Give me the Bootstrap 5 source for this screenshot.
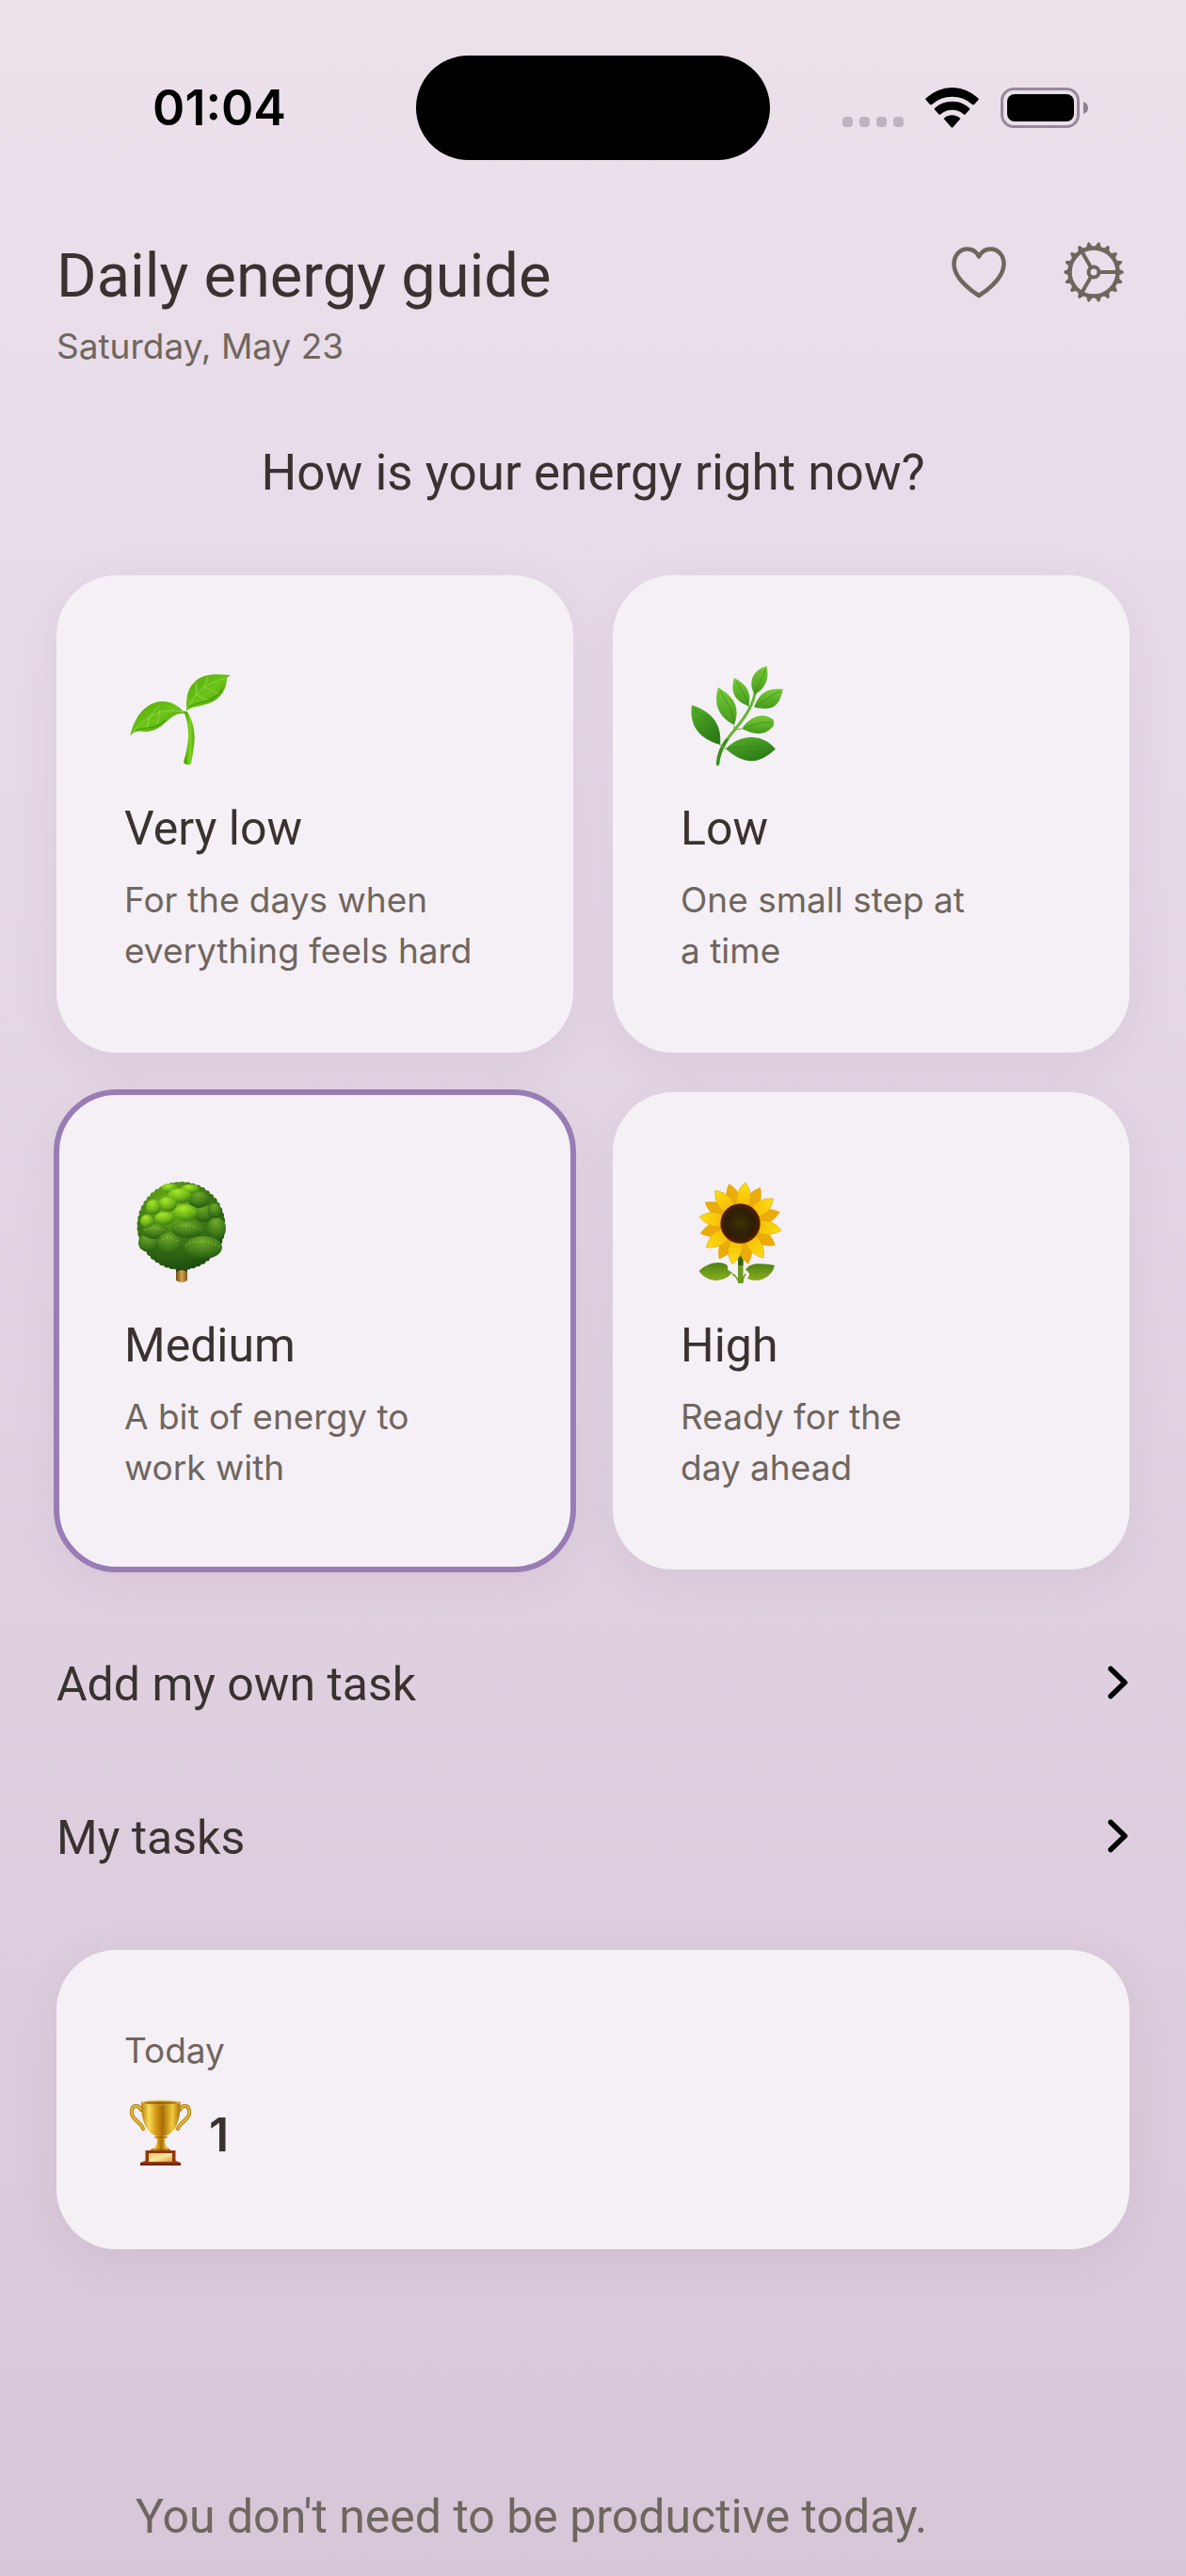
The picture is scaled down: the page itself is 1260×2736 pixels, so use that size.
<!DOCTYPE html>
<html lang="en">
<head>
<meta charset="utf-8">
<meta name="viewport" content="width=device-width, initial-scale=1">
<title>Daily energy guide</title>
<link rel="stylesheet" href="https://cdn.jsdelivr.net/npm/bootstrap@5.3.0/dist/css/bootstrap.min.css">
<style>
  :root { --ink: #3a3230; --soft: #6f665e; --panel: #f5f0f6; --accent: #987db5; }
  body {
    font-family: Roboto, "Liberation Sans", sans-serif;
    color: var(--ink);
    min-height: 100vh;
    background: linear-gradient(180deg, #ebe1ea 0%, #e8dcea 18%, #dfd0e0 64%, #d7c6d8 100%);
  }
  a, button { color: inherit; }
  svg { display: block; flex: none; }
  .status-bar { padding-top: 59px; color: #000; }
  .status-side { flex: 1 1 0; }
  .status-time { font-family: Inter, sans-serif; font-size: 52px; line-height: 62px; font-weight: 600; padding-left: 24px; }
  .status-icons { gap: 23px; padding-right: 104px; }
  .island { width: 376px; height: 111px; background: #000; }
  .page { padding: 83px 60px 30px; }
  .page-title { font-size: 65px; line-height: 80px; font-weight: 400; }
  .note { font-family: Inter, sans-serif; font-size: 37px; line-height: 54px; color: var(--soft); }
  .head-actions { gap: 46px; color: var(--soft); }
  .question { font-size: 53px; line-height: 66px; font-weight: 400; margin: 74px 0 76px; }
  .levels { --bs-gutter-x: 42px; --bs-gutter-y: 42px; }
  .panel {
    background: var(--panel);
    border: 0;
    border-radius: 64px;
    box-shadow: 0 12px 48px rgba(90, 60, 80, .08);
  }
  .level { padding: 72px 60px 81px 72px; }
  .level.chosen { outline: 6px solid var(--accent); outline-offset: -3px; }
  .level-name { font-size: 50px; line-height: 61px; margin: 35px 0 18px; }
  .links { margin: 41px 0 37px; }
  .link-row { font-size: 50px; line-height: 61px; padding: 51px 0; }
  .today { padding: 80px 72px; }
  .score { font-family: Inter, sans-serif; margin-top: 20px; gap: 16px; height: 84px; font-size: 50px; line-height: 61px; font-weight: 600; }
  .closing { font-size: 50px; line-height: 61px; color: var(--soft); margin: 254px 0 0; padding-left: 84px; }
</style>
<script src="https://cdn.jsdelivr.net/npm/bootstrap@5.3.0/dist/js/bootstrap.bundle.min.js"></script>
</head>
<body>

<div class="status-bar d-flex align-items-center">
  <div class="status-side">
    <div class="status-time text-center">01:04</div>
  </div>
  <div class="island rounded-pill"></div>
  <div class="status-side">
    <div class="status-icons d-flex justify-content-end align-items-center">
      <svg width="65" height="43" viewBox="0 0 65 43" fill="#bfb3c0" aria-hidden="true">
        <rect x="0" y="31" width="11" height="11" rx="4"/><rect x="18" y="31" width="11" height="11" rx="4"/><rect x="36" y="31" width="11" height="11" rx="4"/><rect x="54" y="31" width="11" height="11" rx="4"/>
      </svg>
      <svg width="57" height="43" viewBox="0 0 57 43" aria-hidden="true">
        <path d="M0.5 13 Q0 12 1 11 A40 40 0 0 1 56 11 Q57 12 56.500 13 L52 18 Q51 18.500 50 18 A32 32 0 0 0 7 18 Q6 18.500 5 18Z"/>
        <path d="M10 23.500 Q9.500 22.500 10 22 A27 27 0 0 1 47 22 Q47.500 22.500 47 23.500 L42.500 28.500 Q41.500 29 41 28.500 A18.500 18.500 0 0 0 16 28.500 Q15.500 29 14.500 28.500Z"/>
        <path d="M20 33.500 Q19.500 33 20 32.500 A13 13 0 0 1 37 32.500 Q37.500 33 37 33.500 L29.500 42 Q28.500 43 27.500 42Z"/>
      </svg>
      <svg width="93" height="43" viewBox="0 0 93 43" aria-hidden="true">
        <rect x="1.500" y="1.500" width="81" height="40" rx="12.500" fill="none" stroke="#95899a" stroke-width="3"/>
        <rect x="7" y="7" width="71" height="29" rx="8"/>
        <path d="M88 15 Q93 17 93 21.500 Q93 26 88 28Z" fill="#8d8290"/>
      </svg>
    </div>
  </div>
</div>

<main class="page">
  <header class="d-flex justify-content-between align-items-start">
    <div>
      <h1 class="page-title mb-2">Daily energy guide</h1>
      <p class="note mb-0">Saturday, May 23</p>
    </div>
    <div class="head-actions d-flex">
      <button type="button" class="btn p-0 border-0 text-reset" aria-label="Favourites">
        <svg width="76" height="74" viewBox="0 2 76 74" fill="none" stroke="currentColor" stroke-width="4.500" stroke-linejoin="round">
          <path d="M38 63 C33 60 11.500 45.500 11.500 29.500 C11.500 20.500 17.500 13.500 25.500 13.500 C31.500 13.500 35.500 16.500 38 21.500 C40.500 16.500 44.500 13.500 50.500 13.500 C58.500 13.500 64.500 20.500 64.500 29.500 C64.500 45.500 43 60 38 63Z"/>
        </svg>
      </button>
      <button type="button" class="btn p-0 border-0 text-reset" aria-label="Settings">
        <svg width="76" height="74" viewBox="0 2 76 74" fill="none" stroke="currentColor" stroke-width="4">
          <g stroke="none" fill="currentColor">
            <g id="cog6">
              <path id="cog" d="M64.500 34.500 L69.200 36.700 Q71 38 69.200 39.300 L64.500 41.500Z"/>
              <use href="#cog" transform="rotate(20 38 38)"/><use href="#cog" transform="rotate(40 38 38)"/><use href="#cog" transform="rotate(60 38 38)"/><use href="#cog" transform="rotate(80 38 38)"/><use href="#cog" transform="rotate(100 38 38)"/>
            </g>
            <use href="#cog6" transform="rotate(120 38 38)"/><use href="#cog6" transform="rotate(240 38 38)"/>
          </g>
          <circle cx="38" cy="38" r="25.500" stroke-width="4.500"/>
          <circle cx="38" cy="38" r="5.500"/>
          <path d="M44 38H63M35 33L25.500 16.500M35 43L25.500 59.500"/>
        </svg>
      </button>
    </div>
  </header>

  <h2 class="question text-center">How is your energy right now?</h2>

  <div class="row levels">
    <div class="col-6">
      <button type="button" class="card panel level w-100 h-100 text-start">
        <svg width="120" height="132" viewBox="0 0 120 132" aria-hidden="true">
          <defs>
            <linearGradient id="leafA" x1="0" y1="0" x2="1" y2="1"><stop offset="0" stop-color="#4fa80c"/><stop offset=".5" stop-color="#6cc414"/><stop offset="1" stop-color="#3c8a08"/></linearGradient>
            <linearGradient id="stalk" x1="0" x2="1"><stop offset="0" stop-color="#3d9206"/><stop offset=".6" stop-color="#7fd51c"/><stop offset="1" stop-color="#4ea80c"/></linearGradient>
          </defs>
          <path d="M63 72 L67 73 C73 82 76 96 74 109 C73 117 72 122 71 128 Q67 131 63 127 C67 112 72 93 63 72Z" fill="url(#stalk)"/>
          <path d="M6 99 C10 80 22 62 41 62 C51 62 58 67 65 75 C55 74 50 79 44 84 C37 91 28 96 16 93.500 Q9 94 6 99Z" fill="url(#leafA)"/>
          <path d="M66 72 C66 60 66 49 75 41 C85 32 98 33 113 34 L109 37 C109 49 102 60 90 64 C79 68 72 67 66 72Z" fill="url(#leafA)"/>
          <path d="M10 93 C24 78 40 68 62 73 M27 78 L24 91 M38 71 L35 86 M27 78 L38 66 M67 69 C76 53 86 43 107 37 M76 55 L90 61 M84 46 L100 54 M76 55 L77 42 M86 45 L89 36" fill="none" stroke="#93d254" stroke-width="1"/>
          <path d="M12 93 C23 88 30 94 44 82 M68 68 C79 62 96 63 104 49" fill="none" stroke="#327c05" stroke-width="1.500" opacity=".5"/>
        </svg>
        <span class="level-name">Very low</span>
        <span class="note">For the days when<br>everything feels hard</span>
      </button>
    </div>
    <div class="col-6">
      <button type="button" class="card panel level w-100 h-100 text-start">
        <svg width="120" height="132" viewBox="0 0 120 132" aria-hidden="true">
          <defs>
            <linearGradient id="herbLight" x1="0" y1="0" x2="0" y2="1"><stop offset="0" stop-color="#7acb36"/><stop offset="1" stop-color="#43991d"/></linearGradient>
            <linearGradient id="herbDark" x1="0" y1="0" x2=".6" y2="1"><stop offset="0" stop-color="#55b02a"/><stop offset="1" stop-color="#2c7a16"/></linearGradient>
          </defs>
          <path d="M39.500 129 C41 117 45 108 52 99 C64 84 75 72 79 54" fill="none" stroke="#63b634" stroke-width="3" stroke-linecap="round"/>
          <path d="M39.500 128 C40 118 44 110 49 103" fill="none" stroke="#3f8d20" stroke-width="3.500" stroke-linecap="round"/>
          <path d="M42 108 L48 112 M57 88 L57 92 L65 91 M72 66 L75 70" stroke="#63b634" stroke-width="1.200" fill="none"/>
          <g fill="url(#herbDark)">
            <path d="M12 66 C25 70 45 80 42 108 C28 104 8 94 12 66Z"/>
            <path d="M48 112.500 C60 99 84 93 101 112.500 C84 128 70 131 48 112.500Z"/>
          </g>
          <g fill="url(#herbLight)">
            <path d="M40 47 C53 55 65 65 57 87 C43 80 34 68 40 47Z"/>
            <path d="M57 37 C67 42 77 51 72 67 C60 62 52 55 57 37Z"/>
            <path d="M91.500 24.500 C95 38 89 50 78.500 54.500 C72 43 75 29 91.500 24.500Z"/>
            <path d="M109 49 C105 67 98 73 78 68 C85 51 93 48 109 49Z"/>
            <path d="M65 91 C75 76 90 73 99 82 Q100 87 97 90 C88 99 77 97 65 91Z"/>
          </g>
          <path d="M14 70 C26 79 36 90 41 106 M42 51 C49 61 55 72 57 85 M59 41 C65 49 70 57 72 66 M90 28 C87 37 82 46 79 54 M106 51 C97 55 89 61 80 67 M97 84 C87 84 76 86 67 91 M98 112 C82 109 66 109 51 112" fill="none" stroke="#2f8415" stroke-width="1" opacity=".6"/>
        </svg>
        <span class="level-name">Low</span>
        <span class="note">One small step at<br>a time</span>
      </button>
    </div>
    <div class="col-6">
      <button type="button" class="card panel level chosen w-100 h-100 text-start" aria-pressed="true">
        <svg width="120" height="132" viewBox="0 0 120 132" aria-hidden="true">
          <defs>
            <radialGradient id="crown" cx=".38" cy=".25" r=".8"><stop offset="0" stop-color="#7cbf1a"/><stop offset=".5" stop-color="#427f14"/><stop offset="1" stop-color="#1d4d10"/></radialGradient>
            <radialGradient id="puffHi" cx=".4" cy=".25" r=".75"><stop offset="0" stop-color="#a6e627"/><stop offset=".6" stop-color="#6eb31a"/><stop offset="1" stop-color="#3d7c12"/></radialGradient>
            <radialGradient id="puffLo" cx=".45" cy=".2" r=".8"><stop offset="0" stop-color="#6fa82a"/><stop offset=".6" stop-color="#437f1a"/><stop offset="1" stop-color="#245a10"/></radialGradient>
            <linearGradient id="trunk" x1="0" x2="1"><stop offset="0" stop-color="#6e4a18"/><stop offset=".5" stop-color="#d6a547"/><stop offset="1" stop-color="#7d561f"/></linearGradient>
          </defs>
          <path d="M55 105H67V128Q61 132 55 128Z" fill="url(#trunk)"/>
          <path d="M55 108H67V119Q61 115 55 119Z" fill="#2e3410"/>
          <circle cx="60.500" cy="70" r="43" fill="url(#crown)"/>
          <circle cx="60.500" cy="70" r="43" fill="none" stroke="url(#crown)" stroke-width="8" stroke-linecap="round" stroke-dasharray="0 5.500"/>
          <g fill="url(#puffLo)">
            <ellipse cx="26" cy="88" rx="11" ry="10"/><ellipse cx="98" cy="73" rx="10" ry="12"/><ellipse cx="33" cy="76" rx="14" ry="8"/><ellipse cx="48" cy="89" rx="13" ry="12"/><ellipse cx="84" cy="93" rx="20" ry="12"/><ellipse cx="84" cy="57" rx="11" ry="9"/><ellipse cx="67" cy="74" rx="17" ry="9"/><ellipse cx="96" cy="54" rx="7" ry="8"/><ellipse cx="79" cy="42" rx="11" ry="9"/>
          </g>
          <g fill="url(#puffHi)">
            <ellipse cx="48" cy="30" rx="9" ry="5"/><ellipse cx="70" cy="31" rx="10" ry="5"/><ellipse cx="59" cy="38" rx="13" ry="8"/><ellipse cx="46" cy="47" rx="10" ry="8"/><ellipse cx="31" cy="50" rx="8" ry="8"/><ellipse cx="65" cy="56" rx="13" ry="9"/><ellipse cx="43" cy="62" rx="11" ry="7"/><ellipse cx="24" cy="65" rx="7" ry="7"/>
          </g>
          <g fill="none" stroke="#b8ef3c" stroke-width="1.500" stroke-linecap="round" stroke-dasharray="0 4" opacity=".55">
            <path d="M50 36Q59 29 69 37M56 53Q65 47 75 55M35 60Q43 54 52 61M38 45Q46 38 54 46M20 64Q25 58 30 65M54 72Q67 66 81 74M38 86Q48 78 58 87M66 90Q84 82 101 92M22 74Q33 69 45 76"/>
          </g>
        </svg>
        <span class="level-name">Medium</span>
        <span class="note">A bit of energy to<br>work with</span>
      </button>
    </div>
    <div class="col-6">
      <button type="button" class="card panel level w-100 h-100 text-start">
        <svg width="120" height="132" viewBox="0 0 120 132" aria-hidden="true">
          <defs>
            <linearGradient id="petalFill" x1="0" y1="0" x2="0" y2="1"><stop offset="0" stop-color="#fde012"/><stop offset="1" stop-color="#f4b806"/></linearGradient>
            <radialGradient id="disc"><stop offset="0" stop-color="#3b3206"/><stop offset=".65" stop-color="#2b1c05"/><stop offset="1" stop-color="#4d1f04"/></radialGradient>
            <linearGradient id="bloomLeaf" x1="0" y1="0" x2="0" y2="1"><stop offset="0" stop-color="#4c8312"/><stop offset="1" stop-color="#8aad20"/></linearGradient>
            <path id="petal" d="M63.500 23.500 C72 33 73 42 68 52 L59 52 C54 42 56 32 63.500 23.500Z"/>
          </defs>
          <path d="M61 98H66.500V131H61Z" fill="#6b9a1e"/><path d="M61 98H66.500V112H61Z" fill="#34600d"/>
          <path d="M55 121 Q60 124 62 130 M69 121 Q66 125 66 130" fill="none" stroke="#6b9a1e" stroke-width="1.500"/>
          <path d="M19.500 118 C28 109 43 106 50 112 Q49 119 55 119 C49 129 30 133 19.500 118Z" fill="url(#bloomLeaf)"/>
          <path d="M100 112 C97 126 82 131 71 126 Q76 120 69 117 C72 109 86 109 100 112Z" fill="url(#bloomLeaf)"/>
          <g fill="#e9ac0b">
            <use href="#petal" transform="rotate(-16 63.500 67.500)"/><use href="#petal" transform="rotate(29 63.500 67.500)"/><use href="#petal" transform="rotate(74 63.500 67.500)"/><use href="#petal" transform="rotate(122 63.500 67.500)"/><use href="#petal" transform="rotate(169 63.500 67.500)"/><use href="#petal" transform="rotate(211 63.500 67.500)"/><use href="#petal" transform="rotate(256 63.500 67.500)"/><use href="#petal" transform="rotate(301 63.500 67.500)"/>
          </g>
          <g fill="url(#petalFill)" stroke="#e3a205" stroke-width=".6">
            <use href="#petal" transform="rotate(7 63.500 67.500)"/><use href="#petal" transform="rotate(53 63.500 67.500)"/><use href="#petal" transform="rotate(99 63.500 67.500)"/><use href="#petal" transform="rotate(146 63.500 67.500)"/><use href="#petal" transform="rotate(191 63.500 67.500)"/><use href="#petal" transform="rotate(235 63.500 67.500)"/><use href="#petal" transform="rotate(279 63.500 67.500)"/><use href="#petal" transform="rotate(323 63.500 67.500)"/>
          </g>
          <circle cx="63.500" cy="67.500" r="21" fill="url(#disc)"/>
          <g fill="none" stroke="#5c4a0c" stroke-dasharray="1 2" opacity=".8"><circle cx="63.500" cy="67.500" r="5"/><circle cx="63.500" cy="67.500" r="9"/><circle cx="63.500" cy="67.500" r="13"/></g>
          <circle cx="63.500" cy="67.500" r="20.500" fill="none" stroke="#6b2c05" stroke-width="1.500" stroke-dasharray="1.500 1.500"/>
        </svg>
        <span class="level-name">High</span>
        <span class="note">Ready for the<br>day ahead</span>
      </button>
    </div>
  </div>

  <nav class="links" aria-label="Tasks">
    <a href="#add" class="link-row d-flex justify-content-between align-items-center text-decoration-none text-reset">
      Add my own task
      <svg width="24" height="42" viewBox="0 0 24 42" fill="none" stroke="#000" stroke-width="5.500" stroke-linecap="round" stroke-linejoin="round" aria-hidden="true"><path d="M4 3.500L19 18L4 32.500"/></svg>
    </a>
    <a href="#tasks" class="link-row d-flex justify-content-between align-items-center text-decoration-none text-reset">
      My tasks
      <svg width="24" height="42" viewBox="0 0 24 42" fill="none" stroke="#000" stroke-width="5.500" stroke-linecap="round" stroke-linejoin="round" aria-hidden="true"><path d="M4 3.500L19 18L4 32.500"/></svg>
    </a>
  </nav>

  <section class="card panel today">
    <div class="note">Today</div>
    <div class="score d-flex align-items-center">
      <svg width="74" height="84" viewBox="0 0 74 84" role="img" aria-label="Trophies">
        <defs>
          <linearGradient id="gold" x1="0" x2="1"><stop offset="0" stop-color="#b87c0c"/><stop offset=".2" stop-color="#f8dc5a"/><stop offset=".38" stop-color="#d49a14"/><stop offset=".55" stop-color="#a96d08"/><stop offset=".8" stop-color="#f2cb3e"/><stop offset="1" stop-color="#a56c0a"/></linearGradient>
          <linearGradient id="plate" x1="0" y1="0" x2="1" y2="1"><stop offset="0" stop-color="#f3c95f"/><stop offset=".5" stop-color="#fbe6a0"/><stop offset="1" stop-color="#d79a35"/></linearGradient>
        </defs>
        <g fill="none" stroke="#a9780f" stroke-width="4" stroke-linecap="round"><path d="M18 16C14 9 7 11 8 20C9 27 18 29 20 36"/><path d="M59 16C63 9 70 11 69 20C68 27 59 29 57 36"/></g>
        <g fill="none" stroke="#e6bd35" stroke-width="2" stroke-linecap="round"><path d="M18 16C14 9 7 11 8 20C9 27 18 29 20 36"/><path d="M59 16C63 9 70 11 69 20C68 27 59 29 57 36"/></g>
        <path d="M18 7H59.500C60 25 56 39 44 43.500H33.500C22 39 17.500 25 18 7Z" fill="url(#gold)"/>
        <ellipse cx="38.700" cy="8" rx="20.700" ry="2.500" fill="#e9bf45"/><ellipse cx="38.700" cy="8.500" rx="18" ry="1.500" fill="#9c680c"/>
        <path d="M33 43H45Q43 46 43 50Q44 56 49 58V61H28V58Q34 56 35 50Q35 46 33 43Z" fill="url(#gold)"/>
        <path d="M32 45H46M29 58H48" stroke="#8c5808" stroke-width="1.200"/>
        <path d="M22.500 59H54.500V70L60 72V75H17V72L22.500 70Z" fill="#93380c"/>
        <path d="M17 73H60V75H17Z" fill="#6d2408"/>
        <rect x="26" y="62" width="25" height="9" fill="url(#plate)"/>
      </svg>
      <span>1</span>
    </div>
  </section>

  <p class="closing">You don't need to be productive today.</p>
</main>
</body>
</html>
